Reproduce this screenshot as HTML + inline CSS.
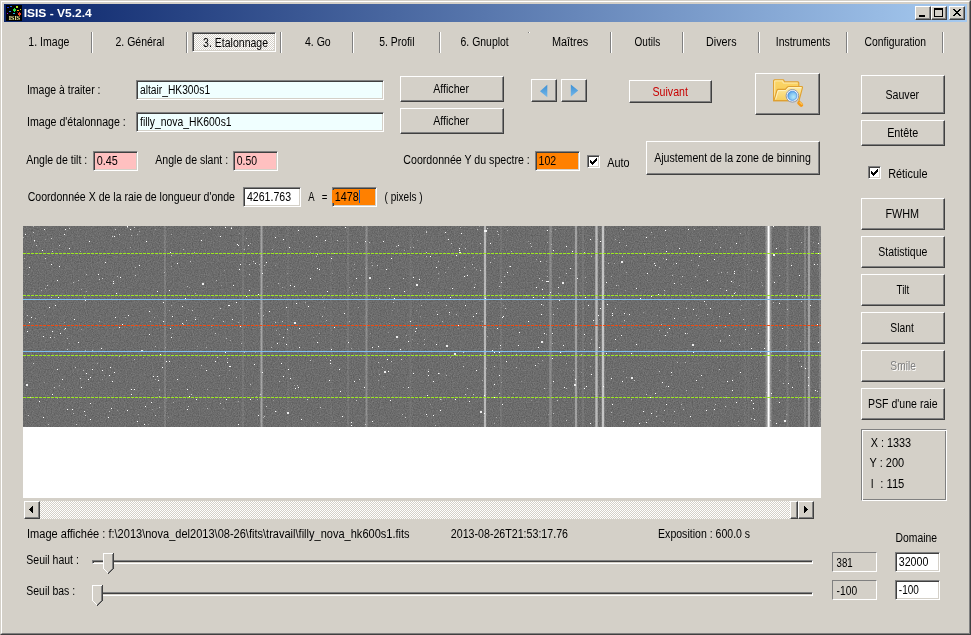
<!DOCTYPE html><html lang="fr"><head><meta charset="utf-8"><title>ISIS - V5.2.4</title><style>
html,body{margin:0;padding:0;background:#D4D0C8;overflow:hidden}
#w{will-change:transform;position:relative;width:971px;height:635px;background:#D4D0C8;overflow:hidden;font-family:"Liberation Sans",sans-serif}
#w *{box-sizing:border-box}
.abs{position:absolute}
.t{position:absolute;white-space:nowrap;font-size:12.5px;line-height:15px;height:15px;color:#000;transform-origin:0 0;display:block}
.btn{position:absolute;background:#D4D0C8;border:1px solid;border-color:#fff #404040 #404040 #fff;box-shadow:inset -1px -1px 0 #808080}
.edit{position:absolute;border:1px solid;border-color:#808080 #fff #fff #808080;box-shadow:inset 1px 1px 0 #404040, inset -1px -1px 0 #D4D0C8}
.sunk1{position:absolute;border:1px solid;border-color:#808080 #fff #fff #808080}
.sep{position:absolute;top:32px;width:2px;height:21px;border-left:1px solid #808080;border-right:1px solid #fff}
.spec{position:absolute;display:block}
.chk{position:absolute;width:13px;height:13px;background:#fff;border:1px solid;border-color:#808080 #fff #fff #808080;box-shadow:inset 1px 1px 0 #404040, inset -1px -1px 0 #D4D0C8}
.dither{background-image:conic-gradient(#fff 25%,#D4D0C8 0 50%,#fff 0 75%,#D4D0C8 0);background-size:2px 2px}
</style></head><body><div id="w">
<div class="abs" style="left:0;top:0;width:971px;height:635px;border:1px solid;border-color:#D4D0C8 #404040 #404040 #D4D0C8"></div>
<div class="abs" style="left:1px;top:1px;width:969px;height:633px;border:1px solid;border-color:#fff #808080 #808080 #fff"></div>
<div class="abs" style="left:4px;top:4px;width:963px;height:18px;background:linear-gradient(90deg,#0A246A,#A6CAF0)"></div>
<svg class="abs" style="left:6px;top:5px" width="16" height="16" viewBox="0 0 16 16" shape-rendering="crispEdges">
<rect width="16" height="16" fill="#000"/>
<rect x="1" y="2" width="2" height="1" fill="#1030e0"/><rect x="4" y="1" width="2" height="1" fill="#2070e0"/>
<rect x="10" y="1" width="2" height="2" fill="#b0e020"/><rect x="14" y="4" width="1" height="1" fill="#e0e020"/>
<rect x="7" y="4" width="3" height="2" fill="#20e040"/><rect x="8" y="3" width="1" height="4" fill="#20e040"/>
<rect x="11" y="5" width="2" height="1" fill="#f0a020"/><rect x="3" y="6" width="2" height="1" fill="#2080f0"/>
<rect x="1" y="8" width="1" height="1" fill="#a010e0"/><rect x="7" y="8" width="2" height="1" fill="#10b0e0"/>
<rect x="12" y="8" width="3" height="2" fill="#f04020"/><rect x="13" y="7" width="1" height="4" fill="#f04020"/><rect x="11" y="7" width="1" height="1" fill="#801008"/>
<text x="8.4" y="15" font-family="Liberation Serif,serif" font-weight="bold" font-size="6.5" text-anchor="middle" fill="#ffffa0" textLength="11.4" lengthAdjust="spacingAndGlyphs" shape-rendering="auto">ISIS</text>
</svg>
<div class="btn" style="left:915px;top:6px;width:16px;height:14px;"></div>
<div class="btn" style="left:931px;top:6px;width:16px;height:14px;"></div>
<div class="btn" style="left:949px;top:6px;width:16px;height:14px;"></div>
<div class="abs" style="left:919px;top:15px;width:6px;height:2px;background:#000"></div>
<div class="abs" style="left:934px;top:8px;width:9px;height:9px;border:1px solid #000;border-top-width:2px"></div>
<svg class="abs" style="left:953px;top:9px" width="8" height="7" viewBox="0 0 8 7" shape-rendering="crispEdges"><path d="M0 0h2v1h1v1h2v-1h1v-1h2v1h-1v1h-1v1h-1v1h1v1h1v1h1v1h-2v-1h-1v-1h-2v1h-1v1h-2v-1h1v-1h1v-1h1v-1h-1v-1h-1v-1h-1z" fill="#000"/></svg>
<div class="sep" style="left:91px"></div>
<div class="sep" style="left:186px"></div>
<div class="sep" style="left:280px"></div>
<div class="sep" style="left:352px"></div>
<div class="sep" style="left:439px"></div>
<div class="sep" style="left:610px"></div>
<div class="sep" style="left:682px"></div>
<div class="sep" style="left:758px"></div>
<div class="sep" style="left:846px"></div>
<div class="sep" style="left:942px"></div>
<div class="abs" style="left:528px;top:32px;width:1px;height:1px;background:#808080"></div><div class="abs" style="left:529px;top:32px;width:1px;height:1px;background:#fff"></div>
<div class="abs dither" style="left:192px;top:32px;width:84px;height:20px;border:1px solid;border-color:#808080 #fff #fff #808080;box-shadow:inset 1px 1px 0 #404040, inset -1px -1px 0 #D4D0C8"></div>
<div class="edit" style="left:136px;top:80px;width:248px;height:20px;background:#F0FFFF;"></div>
<div class="edit" style="left:136px;top:112px;width:248px;height:20px;background:#F0FFFF;"></div>
<div class="btn" style="left:400px;top:76px;width:104px;height:26px;"></div>
<div class="btn" style="left:400px;top:108px;width:104px;height:26px;"></div>
<div class="btn" style="left:531px;top:79px;width:26px;height:23px;"></div>
<div class="btn" style="left:561px;top:79px;width:26px;height:23px;"></div>
<svg class="abs" style="left:531px;top:79px" width="56" height="23" viewBox="0 0 56 23">
<defs><linearGradient id="ga" x1="0" y1="0" x2="0" y2="1"><stop offset="0" stop-color="#3c8fd4"/><stop offset="1" stop-color="#74b8ea"/></linearGradient></defs>
<path d="M9 12.2 L16.3 5.8 L16.3 18.3 Z" fill="url(#ga)"/>
<path d="M39.8 5.6 L47.2 11.6 L39.8 17.8 Z" fill="url(#ga)"/></svg>
<div class="btn" style="left:629px;top:80px;width:83px;height:23px;"></div>
<div class="btn" style="left:755px;top:73px;width:65px;height:42px;"></div>
<svg class="abs" style="left:768px;top:76px" width="40" height="34" viewBox="0 0 40 34">
<defs>
<linearGradient id="fb" x1="0" y1="0" x2="0" y2="1"><stop offset="0" stop-color="#fbd668"/><stop offset="1" stop-color="#f7c750"/></linearGradient>
<linearGradient id="ff" x1="0" y1="0" x2="0" y2="1"><stop offset="0" stop-color="#fdeaa4"/><stop offset="1" stop-color="#f8cf5c"/></linearGradient>
<radialGradient id="gl" cx="0.62" cy="0.62" r="0.75"><stop offset="0" stop-color="#b4e8fa"/><stop offset="0.55" stop-color="#84c4f0"/><stop offset="1" stop-color="#3c8ee4"/></radialGradient>
</defs>
<path d="M5.6 4.7 Q5.6 3.7 6.6 3.7 L15 3.7 Q15.8 3.7 16 4.6 L16.2 5.9 L29.8 5.9 Q30.8 5.9 30.8 6.9 L30.8 24.6 L5.6 24.6 Z" fill="url(#fb)" stroke="#dfa030" stroke-width="1.1"/>
<path d="M6.7 23.6 L6.7 4.9 L14.9 4.9 L15.2 7 L29.7 7" fill="none" stroke="#fff3c4" stroke-width="0.9" opacity="0.9"/>
<path d="M5.9 24.6 L9 14.2 Q9.3 13.4 10.2 13.4 L17.2 13.4 L19.6 10.9 Q20 10.5 20.8 10.5 L33.6 10.5 Q34.8 10.5 34.5 11.7 L31 24.6 Z" fill="url(#ff)" stroke="#dfa030" stroke-width="1.1"/>
<path d="M7.6 23.4 L10.2 14.6 L17.7 14.6 L20.6 11.7 L33 11.7" fill="none" stroke="#fff8d8" stroke-width="0.8" opacity="0.9"/>
<path d="M29 24.6 L30.6 26.2" stroke="#c8ccd4" stroke-width="2.2" stroke-linecap="butt"/>
<path d="M31.2 26.9 L33.2 28.9" stroke="#f49a18" stroke-width="4" stroke-linecap="round"/>
<path d="M31.9 26.3 L34 28.3" stroke="#fdc860" stroke-width="1.1" stroke-linecap="round"/>
<circle cx="24.4" cy="19.8" r="6.3" fill="#f4f7fa" stroke="#8890a4" stroke-width="0.9"/>
<circle cx="24.4" cy="19.8" r="4.6" fill="url(#gl)" stroke="#4088dc" stroke-width="0.7"/>
</svg>
<div class="edit" style="left:93px;top:151px;width:45px;height:20px;background:#FFC0C0;"></div>
<div class="edit" style="left:233px;top:151px;width:45px;height:20px;background:#FFC0C0;"></div>
<div class="edit" style="left:535px;top:151px;width:45px;height:20px;background:#FF8000;"></div>
<div class="chk" style="left:587px;top:155px"></div>
<svg class="abs" style="left:590px;top:158px" width="7" height="7" viewBox="0 0 7 7" shape-rendering="crispEdges"><path d="M0 2h1v1h1v1h1v-1h1v-1h1v-1h1v-1h1v3h-1v1h-1v1h-1v1h-1v1h-1v-1h-1v-1h-1z" fill="#000"/></svg>
<div class="btn" style="left:646px;top:141px;width:174px;height:34px;"></div>
<div class="edit" style="left:243px;top:187px;width:58px;height:20px;background:#fff;"></div>
<div class="edit" style="left:332px;top:187px;width:45px;height:20px;background:#FF8000;"></div>
<div class="abs" style="left:332px;top:190px;width:2px;height:13px;background:#FF8000"></div>
<div class="abs" style="left:359px;top:190px;width:1px;height:13px;background:#1060d0"></div>
<div class="btn" style="left:861px;top:75px;width:84px;height:39px;"></div>
<div class="btn" style="left:861px;top:120px;width:84px;height:26px;"></div>
<div class="chk" style="left:868px;top:166px"></div>
<svg class="abs" style="left:871px;top:169px" width="7" height="7" viewBox="0 0 7 7" shape-rendering="crispEdges"><path d="M0 2h1v1h1v1h1v-1h1v-1h1v-1h1v-1h1v3h-1v1h-1v1h-1v1h-1v1h-1v-1h-1v-1h-1z" fill="#000"/></svg>
<div class="btn" style="left:861px;top:198px;width:84px;height:32px;"></div>
<div class="btn" style="left:861px;top:236px;width:84px;height:32px;"></div>
<div class="btn" style="left:861px;top:274px;width:84px;height:32px;"></div>
<div class="btn" style="left:861px;top:312px;width:84px;height:32px;"></div>
<div class="btn" style="left:861px;top:350px;width:84px;height:32px;"></div>
<div class="btn" style="left:861px;top:388px;width:84px;height:32px;"></div>
<div class="abs" style="left:861px;top:429px;width:86px;height:72px;border:1px solid;border-color:#808080 #fff #fff #808080;box-shadow:inset 1px 1px 0 #fff, inset -1px -1px 0 #808080"></div>
<div class="abs" style="left:23px;top:226px;width:798px;height:272px;background:#fff"></div>
<svg class="spec" width="798" height="201" viewBox="0 0 798 201" style="left:23px;top:226px">
<defs><filter id="nz" x="0" y="0" width="100%" height="100%" color-interpolation-filters="sRGB"><feTurbulence type="fractalNoise" baseFrequency="0.85" numOctaves="2" seed="3" result="n"/><feColorMatrix in="n" type="matrix" values="0.2 0 0 0 0.323  0.2 0 0 0 0.323  0.2 0 0 0 0.323  0 0 0 0 1"/></filter><filter id="bl" x="-1%" y="0" width="102%" height="100%"><feGaussianBlur stdDeviation="0.55 0"/></filter></defs>
<rect width="798" height="201" fill="#6e6e6e"/>
<rect width="798" height="201" filter="url(#nz)"/>
<g filter="url(#bl)">
<rect x="141.00" y="0" width="2" height="201" fill="#fff" fill-opacity="0.121"/>
<rect x="219.00" y="0" width="2" height="201" fill="#fff" fill-opacity="0.069"/>
<rect x="237.50" y="0" width="2" height="201" fill="#fff" fill-opacity="0.379"/>
<rect x="264.00" y="0" width="2" height="201" fill="#fff" fill-opacity="0.034"/>
<rect x="307.00" y="0" width="2" height="201" fill="#fff" fill-opacity="0.026"/>
<rect x="324.00" y="0" width="2" height="201" fill="#fff" fill-opacity="0.069"/>
<rect x="342.50" y="0" width="2" height="201" fill="#fff" fill-opacity="0.224"/>
<rect x="386.50" y="0" width="2" height="201" fill="#fff" fill-opacity="0.052"/>
<rect x="460.90" y="0" width="2.2" height="201" fill="#fff" fill-opacity="0.517"/>
<rect x="477.00" y="0" width="2" height="201" fill="#fff" fill-opacity="0.060"/>
<rect x="526.25" y="0" width="2.5" height="201" fill="#fff" fill-opacity="0.207"/>
<rect x="551.90" y="0" width="2.2" height="201" fill="#fff" fill-opacity="0.362"/>
<rect x="559.00" y="0" width="2" height="201" fill="#fff" fill-opacity="0.069"/>
<rect x="572.30" y="0" width="2.4" height="201" fill="#fff" fill-opacity="0.534"/>
<rect x="578.80" y="0" width="2.4" height="201" fill="#fff" fill-opacity="0.603"/>
<rect x="721.25" y="0" width="1.5" height="201" fill="#fff" fill-opacity="0.043"/>
<rect x="724.95" y="0" width="1.5" height="201" fill="#fff" fill-opacity="0.043"/>
<rect x="763.50" y="0" width="2" height="201" fill="#fff" fill-opacity="0.095"/>
<rect x="781.00" y="0" width="2" height="201" fill="#fff" fill-opacity="0.155"/>
<rect x="784.90" y="0" width="2.2" height="201" fill="#fff" fill-opacity="0.362"/>
<rect x="796.00" y="0" width="2" height="201" fill="#fff" fill-opacity="0.121"/>
<rect x="742.5" y="0" width="6" height="201" fill="#fff" fill-opacity="0.25"/>
<rect x="744.6" y="0" width="2.0" height="201" fill="#ffffff"/>
</g>
<g shape-rendering="crispEdges">
<rect x="331" y="38" width="1" height="1" fill="#aaa"/>
<rect x="74" y="137" width="1" height="1" fill="#aaa"/>
<rect x="519" y="54" width="1" height="1" fill="#ccc"/>
<rect x="428" y="17" width="1" height="1" fill="#ccc"/>
<rect x="60" y="144" width="1" height="1" fill="#bbb"/>
<rect x="645" y="160" width="1" height="1" fill="#fff"/>
<rect x="63" y="147" width="1" height="1" fill="#fff"/>
<rect x="50" y="56" width="1" height="1" fill="#bbb"/>
<rect x="296" y="107" width="1" height="1" fill="#aaa"/>
<rect x="584" y="78" width="1" height="1" fill="#fff"/>
<rect x="698" y="46" width="1" height="1" fill="#bbb"/>
<rect x="381" y="24" width="1" height="1" fill="#aaa"/>
<rect x="577" y="15" width="1" height="1" fill="#fff"/>
<rect x="508" y="174" width="1" height="1" fill="#999"/>
<rect x="476" y="149" width="1" height="1" fill="#fff"/>
<rect x="370" y="76" width="1" height="1" fill="#bbb"/>
<rect x="715" y="199" width="1" height="1" fill="#999"/>
<rect x="537" y="126" width="1" height="1" fill="#fff"/>
<rect x="746" y="114" width="1" height="1" fill="#aaa"/>
<rect x="120" y="131" width="1" height="1" fill="#999"/>
<rect x="155" y="125" width="1" height="1" fill="#aaa"/>
<rect x="782" y="142" width="1" height="1" fill="#fff"/>
<rect x="321" y="87" width="1" height="1" fill="#fff"/>
<rect x="608" y="127" width="1" height="1" fill="#fff"/>
<rect x="467" y="17" width="1" height="1" fill="#fff"/>
<rect x="276" y="121" width="1" height="1" fill="#fff"/>
<rect x="66" y="15" width="1" height="1" fill="#fff"/>
<rect x="317" y="165" width="1" height="1" fill="#fff"/>
<rect x="697" y="114" width="1" height="1" fill="#ccc"/>
<rect x="684" y="88" width="1" height="1" fill="#ccc"/>
<rect x="363" y="43" width="1" height="1" fill="#fff"/>
<rect x="505" y="15" width="1" height="1" fill="#999"/>
<rect x="132" y="189" width="1" height="1" fill="#ccc"/>
<rect x="508" y="20" width="1" height="1" fill="#ccc"/>
<rect x="562" y="71" width="1" height="1" fill="#fff"/>
<rect x="440" y="140" width="1" height="1" fill="#ccc"/>
<rect x="367" y="174" width="1" height="1" fill="#fff"/>
<rect x="236" y="38" width="1" height="1" fill="#bbb"/>
<rect x="237" y="168" width="1" height="1" fill="#ccc"/>
<rect x="603" y="46" width="1" height="1" fill="#aaa"/>
<rect x="149" y="107" width="1" height="1" fill="#999"/>
<rect x="128" y="176" width="1" height="1" fill="#fff"/>
<rect x="632" y="167" width="1" height="1" fill="#fff"/>
<rect x="55" y="116" width="1" height="1" fill="#fff"/>
<rect x="696" y="143" width="1" height="1" fill="#ccc"/>
<rect x="403" y="26" width="1" height="1" fill="#ccc"/>
<rect x="63" y="48" width="1" height="1" fill="#bbb"/>
<rect x="451" y="41" width="1" height="1" fill="#aaa"/>
<rect x="104" y="0" width="1" height="1" fill="#fff"/>
<rect x="549" y="25" width="1" height="1" fill="#fff"/>
<rect x="628" y="6" width="1" height="1" fill="#bbb"/>
<rect x="628" y="96" width="1" height="1" fill="#999"/>
<rect x="355" y="154" width="1" height="1" fill="#aaa"/>
<rect x="118" y="124" width="2" height="2" fill="#eee"/>
<rect x="477" y="122" width="1" height="1" fill="#aaa"/>
<rect x="147" y="26" width="1" height="1" fill="#fff"/>
<rect x="758" y="67" width="1" height="1" fill="#bbb"/>
<rect x="528" y="5" width="1" height="1" fill="#999"/>
<rect x="150" y="176" width="1" height="1" fill="#aaa"/>
<rect x="776" y="135" width="1" height="1" fill="#aaa"/>
<rect x="712" y="66" width="1" height="1" fill="#bbb"/>
<rect x="364" y="197" width="1" height="1" fill="#999"/>
<rect x="651" y="57" width="1" height="1" fill="#fff"/>
<rect x="776" y="49" width="1" height="1" fill="#fff"/>
<rect x="410" y="189" width="1" height="1" fill="#fff"/>
<rect x="204" y="132" width="1" height="1" fill="#aaa"/>
<rect x="28" y="71" width="1" height="1" fill="#bbb"/>
<rect x="709" y="154" width="1" height="1" fill="#fff"/>
<rect x="457" y="185" width="2" height="2" fill="#eee"/>
<rect x="373" y="20" width="1" height="1" fill="#bbb"/>
<rect x="481" y="50" width="1" height="1" fill="#ccc"/>
<rect x="639" y="156" width="1" height="1" fill="#fff"/>
<rect x="490" y="167" width="1" height="1" fill="#aaa"/>
<rect x="676" y="30" width="1" height="1" fill="#fff"/>
<rect x="728" y="192" width="1" height="1" fill="#bbb"/>
<rect x="444" y="162" width="1" height="1" fill="#ccc"/>
<rect x="474" y="102" width="1" height="1" fill="#fff"/>
<rect x="86" y="185" width="1" height="1" fill="#bbb"/>
<rect x="28" y="38" width="1" height="1" fill="#fff"/>
<rect x="476" y="167" width="1" height="1" fill="#ccc"/>
<rect x="673" y="89" width="1" height="1" fill="#bbb"/>
<rect x="21" y="3" width="1" height="1" fill="#fff"/>
<rect x="743" y="166" width="1" height="1" fill="#bbb"/>
<rect x="444" y="49" width="1" height="1" fill="#fff"/>
<rect x="216" y="7" width="1" height="1" fill="#999"/>
<rect x="513" y="61" width="1" height="1" fill="#fff"/>
<rect x="333" y="66" width="1" height="1" fill="#bbb"/>
<rect x="62" y="189" width="1" height="1" fill="#ccc"/>
<rect x="678" y="149" width="1" height="1" fill="#fff"/>
<rect x="529" y="107" width="1" height="1" fill="#fff"/>
<rect x="513" y="33" width="1" height="1" fill="#aaa"/>
<rect x="450" y="198" width="1" height="1" fill="#aaa"/>
<rect x="794" y="38" width="1" height="1" fill="#ccc"/>
<rect x="633" y="185" width="1" height="1" fill="#aaa"/>
<rect x="333" y="174" width="1" height="1" fill="#ccc"/>
<rect x="795" y="27" width="1" height="1" fill="#fff"/>
<rect x="58" y="63" width="1" height="1" fill="#aaa"/>
<rect x="790" y="25" width="1" height="1" fill="#aaa"/>
<rect x="778" y="16" width="1" height="1" fill="#bbb"/>
<rect x="709" y="70" width="1" height="1" fill="#ccc"/>
<rect x="519" y="63" width="1" height="1" fill="#fff"/>
<rect x="265" y="143" width="1" height="1" fill="#fff"/>
<rect x="207" y="114" width="1" height="1" fill="#aaa"/>
<rect x="401" y="113" width="1" height="1" fill="#bbb"/>
<rect x="438" y="18" width="1" height="1" fill="#999"/>
<rect x="125" y="198" width="1" height="1" fill="#999"/>
<rect x="146" y="64" width="1" height="1" fill="#fff"/>
<rect x="478" y="56" width="1" height="1" fill="#fff"/>
<rect x="96" y="101" width="1" height="1" fill="#fff"/>
<rect x="166" y="170" width="1" height="1" fill="#fff"/>
<rect x="165" y="180" width="1" height="1" fill="#ccc"/>
<rect x="347" y="107" width="1" height="1" fill="#999"/>
<rect x="94" y="184" width="1" height="1" fill="#999"/>
<rect x="567" y="117" width="1" height="1" fill="#aaa"/>
<rect x="393" y="84" width="1" height="1" fill="#999"/>
<rect x="524" y="16" width="1" height="1" fill="#bbb"/>
<rect x="107" y="21" width="1" height="1" fill="#aaa"/>
<rect x="185" y="69" width="1" height="1" fill="#fff"/>
<rect x="432" y="173" width="1" height="1" fill="#fff"/>
<rect x="264" y="103" width="1" height="1" fill="#ccc"/>
<rect x="717" y="83" width="1" height="1" fill="#aaa"/>
<rect x="704" y="46" width="1" height="1" fill="#aaa"/>
<rect x="275" y="4" width="1" height="1" fill="#fff"/>
<rect x="266" y="21" width="1" height="1" fill="#fff"/>
<rect x="227" y="17" width="1" height="1" fill="#aaa"/>
<rect x="464" y="2" width="1" height="1" fill="#ccc"/>
<rect x="274" y="159" width="1" height="1" fill="#bbb"/>
<rect x="112" y="41" width="1" height="1" fill="#bbb"/>
<rect x="206" y="79" width="1" height="1" fill="#fff"/>
<rect x="543" y="194" width="1" height="1" fill="#ccc"/>
<rect x="512" y="172" width="1" height="1" fill="#999"/>
<rect x="18" y="64" width="1" height="1" fill="#aaa"/>
<rect x="750" y="129" width="1" height="1" fill="#fff"/>
<rect x="194" y="131" width="1" height="1" fill="#ccc"/>
<rect x="108" y="168" width="1" height="1" fill="#fff"/>
<rect x="442" y="168" width="1" height="1" fill="#ccc"/>
<rect x="518" y="78" width="1" height="1" fill="#fff"/>
<rect x="235" y="87" width="1" height="1" fill="#bbb"/>
<rect x="414" y="88" width="1" height="1" fill="#fff"/>
<rect x="132" y="3" width="1" height="1" fill="#999"/>
<rect x="441" y="41" width="1" height="1" fill="#ccc"/>
<rect x="518" y="171" width="1" height="1" fill="#fff"/>
<rect x="613" y="62" width="1" height="1" fill="#fff"/>
<rect x="46" y="117" width="1" height="1" fill="#999"/>
<rect x="456" y="0" width="1" height="1" fill="#999"/>
<rect x="560" y="82" width="1" height="1" fill="#999"/>
<rect x="223" y="91" width="1" height="1" fill="#999"/>
<rect x="390" y="21" width="1" height="1" fill="#bbb"/>
<rect x="254" y="129" width="1" height="1" fill="#fff"/>
<rect x="93" y="67" width="1" height="1" fill="#fff"/>
<rect x="147" y="102" width="1" height="1" fill="#fff"/>
<rect x="403" y="5" width="1" height="1" fill="#bbb"/>
<rect x="86" y="149" width="1" height="1" fill="#fff"/>
<rect x="768" y="39" width="1" height="1" fill="#fff"/>
<rect x="733" y="152" width="1" height="1" fill="#999"/>
<rect x="737" y="126" width="1" height="1" fill="#bbb"/>
<rect x="44" y="183" width="1" height="1" fill="#fff"/>
<rect x="642" y="109" width="1" height="1" fill="#fff"/>
<rect x="517" y="35" width="1" height="1" fill="#fff"/>
<rect x="770" y="129" width="1" height="1" fill="#fff"/>
<rect x="16" y="175" width="1" height="1" fill="#fff"/>
<rect x="728" y="174" width="1" height="1" fill="#fff"/>
<rect x="658" y="58" width="1" height="1" fill="#aaa"/>
<rect x="136" y="163" width="1" height="1" fill="#aaa"/>
<rect x="385" y="115" width="1" height="1" fill="#fff"/>
<rect x="642" y="4" width="1" height="1" fill="#fff"/>
<rect x="697" y="62" width="1" height="1" fill="#aaa"/>
<rect x="467" y="17" width="1" height="1" fill="#fff"/>
<rect x="515" y="137" width="1" height="1" fill="#aaa"/>
<rect x="763" y="188" width="1" height="1" fill="#aaa"/>
<rect x="271" y="60" width="1" height="1" fill="#fff"/>
<rect x="210" y="59" width="1" height="1" fill="#fff"/>
<rect x="471" y="126" width="1" height="1" fill="#fff"/>
<rect x="78" y="122" width="1" height="1" fill="#fff"/>
<rect x="294" y="196" width="1" height="1" fill="#bbb"/>
<rect x="79" y="153" width="1" height="1" fill="#999"/>
<rect x="667" y="190" width="1" height="1" fill="#fff"/>
<rect x="636" y="145" width="1" height="1" fill="#ccc"/>
<rect x="62" y="124" width="1" height="1" fill="#aaa"/>
<rect x="708" y="55" width="1" height="1" fill="#fff"/>
<rect x="297" y="181" width="1" height="1" fill="#ccc"/>
<rect x="477" y="119" width="1" height="1" fill="#fff"/>
<rect x="562" y="51" width="1" height="1" fill="#aaa"/>
<rect x="484" y="4" width="1" height="1" fill="#aaa"/>
<rect x="518" y="115" width="2" height="2" fill="#eee"/>
<rect x="396" y="53" width="1" height="1" fill="#fff"/>
<rect x="215" y="19" width="1" height="1" fill="#fff"/>
<rect x="145" y="191" width="1" height="1" fill="#999"/>
<rect x="135" y="154" width="1" height="1" fill="#fff"/>
<rect x="520" y="71" width="1" height="1" fill="#fff"/>
<rect x="720" y="93" width="1" height="1" fill="#ccc"/>
<rect x="403" y="6" width="1" height="1" fill="#ccc"/>
<rect x="697" y="115" width="1" height="1" fill="#bbb"/>
<rect x="426" y="88" width="1" height="1" fill="#aaa"/>
<rect x="339" y="0" width="1" height="1" fill="#999"/>
<rect x="407" y="30" width="1" height="1" fill="#fff"/>
<rect x="200" y="182" width="1" height="1" fill="#999"/>
<rect x="259" y="95" width="1" height="1" fill="#ccc"/>
<rect x="603" y="19" width="1" height="1" fill="#ccc"/>
<rect x="773" y="70" width="1" height="1" fill="#fff"/>
<rect x="287" y="26" width="1" height="1" fill="#999"/>
<rect x="650" y="38" width="1" height="1" fill="#999"/>
<rect x="446" y="130" width="1" height="1" fill="#999"/>
<rect x="438" y="7" width="1" height="1" fill="#fff"/>
<rect x="646" y="102" width="1" height="1" fill="#fff"/>
<rect x="567" y="140" width="1" height="1" fill="#aaa"/>
<rect x="50" y="187" width="1" height="1" fill="#bbb"/>
<rect x="659" y="73" width="1" height="1" fill="#bbb"/>
<rect x="174" y="120" width="1" height="1" fill="#999"/>
<rect x="304" y="65" width="1" height="1" fill="#fff"/>
<rect x="668" y="66" width="1" height="1" fill="#bbb"/>
<rect x="308" y="123" width="1" height="1" fill="#fff"/>
<rect x="403" y="30" width="1" height="1" fill="#bbb"/>
<rect x="76" y="53" width="1" height="1" fill="#ccc"/>
<rect x="563" y="56" width="1" height="1" fill="#999"/>
<rect x="777" y="115" width="1" height="1" fill="#bbb"/>
<rect x="249" y="23" width="1" height="1" fill="#aaa"/>
<rect x="326" y="61" width="1" height="1" fill="#bbb"/>
<rect x="20" y="191" width="1" height="1" fill="#fff"/>
<rect x="392" y="105" width="1" height="1" fill="#fff"/>
<rect x="215" y="96" width="1" height="1" fill="#aaa"/>
<rect x="510" y="71" width="1" height="1" fill="#fff"/>
<rect x="368" y="32" width="1" height="1" fill="#fff"/>
<rect x="541" y="161" width="1" height="1" fill="#fff"/>
<rect x="221" y="23" width="1" height="1" fill="#bbb"/>
<rect x="393" y="102" width="1" height="1" fill="#fff"/>
<rect x="442" y="79" width="1" height="1" fill="#fff"/>
<rect x="22" y="32" width="1" height="1" fill="#ccc"/>
<rect x="601" y="125" width="1" height="1" fill="#ccc"/>
<rect x="540" y="119" width="1" height="1" fill="#fff"/>
<rect x="254" y="27" width="1" height="1" fill="#bbb"/>
<rect x="534" y="174" width="1" height="1" fill="#ccc"/>
<rect x="87" y="141" width="1" height="1" fill="#fff"/>
<rect x="1" y="32" width="1" height="1" fill="#aaa"/>
<rect x="660" y="183" width="1" height="1" fill="#bbb"/>
<rect x="641" y="64" width="1" height="1" fill="#ccc"/>
<rect x="715" y="195" width="1" height="1" fill="#aaa"/>
<rect x="307" y="134" width="1" height="1" fill="#fff"/>
<rect x="196" y="99" width="1" height="1" fill="#aaa"/>
<rect x="10" y="137" width="1" height="1" fill="#ccc"/>
<rect x="285" y="80" width="1" height="1" fill="#fff"/>
<rect x="248" y="121" width="1" height="1" fill="#bbb"/>
<rect x="29" y="105" width="1" height="1" fill="#fff"/>
<rect x="314" y="14" width="1" height="1" fill="#ccc"/>
<rect x="690" y="165" width="1" height="1" fill="#999"/>
<rect x="233" y="170" width="1" height="1" fill="#999"/>
<rect x="232" y="126" width="1" height="1" fill="#999"/>
<rect x="735" y="107" width="1" height="1" fill="#ccc"/>
<rect x="202" y="1" width="1" height="1" fill="#fff"/>
<rect x="756" y="129" width="1" height="1" fill="#ccc"/>
<rect x="205" y="79" width="1" height="1" fill="#fff"/>
<rect x="198" y="59" width="1" height="1" fill="#999"/>
<rect x="778" y="75" width="1" height="1" fill="#ccc"/>
<rect x="624" y="47" width="1" height="1" fill="#fff"/>
<rect x="496" y="106" width="1" height="1" fill="#fff"/>
<rect x="57" y="152" width="1" height="1" fill="#ccc"/>
<rect x="55" y="54" width="1" height="1" fill="#bbb"/>
<rect x="425" y="13" width="1" height="1" fill="#fff"/>
<rect x="188" y="100" width="1" height="1" fill="#999"/>
<rect x="750" y="28" width="2" height="2" fill="#eee"/>
<rect x="169" y="84" width="1" height="1" fill="#ccc"/>
<rect x="32" y="79" width="1" height="1" fill="#fff"/>
<rect x="387" y="95" width="1" height="1" fill="#fff"/>
<rect x="453" y="43" width="1" height="1" fill="#aaa"/>
<rect x="286" y="20" width="1" height="1" fill="#aaa"/>
<rect x="574" y="194" width="1" height="1" fill="#999"/>
<rect x="787" y="79" width="1" height="1" fill="#fff"/>
<rect x="442" y="22" width="1" height="1" fill="#ccc"/>
<rect x="200" y="95" width="1" height="1" fill="#ccc"/>
<rect x="197" y="82" width="1" height="1" fill="#ccc"/>
<rect x="31" y="161" width="1" height="1" fill="#ccc"/>
<rect x="41" y="96" width="1" height="1" fill="#aaa"/>
<rect x="63" y="65" width="1" height="1" fill="#aaa"/>
<rect x="620" y="86" width="1" height="1" fill="#999"/>
<rect x="631" y="11" width="1" height="1" fill="#999"/>
<rect x="282" y="76" width="1" height="1" fill="#aaa"/>
<rect x="24" y="59" width="1" height="1" fill="#ccc"/>
<rect x="794" y="98" width="1" height="1" fill="#fff"/>
<rect x="440" y="126" width="1" height="1" fill="#ccc"/>
<rect x="187" y="2" width="1" height="1" fill="#fff"/>
<rect x="756" y="77" width="1" height="1" fill="#fff"/>
<rect x="791" y="38" width="1" height="1" fill="#fff"/>
<rect x="335" y="81" width="1" height="1" fill="#aaa"/>
<rect x="524" y="50" width="1" height="1" fill="#bbb"/>
<rect x="253" y="104" width="1" height="1" fill="#aaa"/>
<rect x="493" y="141" width="1" height="1" fill="#bbb"/>
<rect x="436" y="26" width="2" height="2" fill="#eee"/>
<rect x="271" y="159" width="1" height="1" fill="#aaa"/>
<rect x="431" y="127" width="2" height="2" fill="#eee"/>
<rect x="457" y="44" width="1" height="1" fill="#ccc"/>
<rect x="471" y="158" width="1" height="1" fill="#fff"/>
<rect x="240" y="191" width="1" height="1" fill="#aaa"/>
<rect x="300" y="75" width="1" height="1" fill="#999"/>
<rect x="381" y="65" width="1" height="1" fill="#fff"/>
<rect x="203" y="112" width="1" height="1" fill="#bbb"/>
<rect x="241" y="39" width="1" height="1" fill="#bbb"/>
<rect x="334" y="16" width="1" height="1" fill="#bbb"/>
<rect x="519" y="134" width="1" height="1" fill="#aaa"/>
<rect x="669" y="118" width="2" height="2" fill="#eee"/>
<rect x="104" y="1" width="1" height="1" fill="#bbb"/>
<rect x="459" y="95" width="1" height="1" fill="#999"/>
<rect x="238" y="30" width="1" height="1" fill="#bbb"/>
<rect x="76" y="95" width="1" height="1" fill="#bbb"/>
<rect x="459" y="154" width="1" height="1" fill="#aaa"/>
<rect x="108" y="163" width="1" height="1" fill="#fff"/>
<rect x="634" y="89" width="1" height="1" fill="#999"/>
<rect x="348" y="36" width="1" height="1" fill="#999"/>
<rect x="39" y="153" width="1" height="1" fill="#fff"/>
<rect x="208" y="2" width="1" height="1" fill="#fff"/>
<rect x="418" y="173" width="1" height="1" fill="#999"/>
<rect x="79" y="52" width="1" height="1" fill="#ccc"/>
<rect x="561" y="123" width="1" height="1" fill="#aaa"/>
<rect x="404" y="169" width="1" height="1" fill="#fff"/>
<rect x="654" y="136" width="1" height="1" fill="#bbb"/>
<rect x="407" y="178" width="1" height="1" fill="#999"/>
<rect x="683" y="78" width="1" height="1" fill="#aaa"/>
<rect x="319" y="190" width="1" height="1" fill="#fff"/>
<rect x="365" y="106" width="1" height="1" fill="#999"/>
<rect x="659" y="50" width="1" height="1" fill="#ccc"/>
<rect x="208" y="1" width="1" height="1" fill="#bbb"/>
<rect x="433" y="29" width="1" height="1" fill="#fff"/>
<rect x="415" y="147" width="1" height="1" fill="#fff"/>
<rect x="471" y="197" width="1" height="1" fill="#aaa"/>
<rect x="52" y="141" width="1" height="1" fill="#ccc"/>
<rect x="91" y="146" width="1" height="1" fill="#fff"/>
<rect x="379" y="188" width="1" height="1" fill="#bbb"/>
<rect x="356" y="72" width="1" height="1" fill="#bbb"/>
<rect x="68" y="27" width="1" height="1" fill="#bbb"/>
<rect x="308" y="32" width="1" height="1" fill="#fff"/>
<rect x="44" y="123" width="1" height="1" fill="#ccc"/>
<rect x="88" y="182" width="1" height="1" fill="#fff"/>
<rect x="164" y="163" width="1" height="1" fill="#fff"/>
<rect x="227" y="158" width="1" height="1" fill="#bbb"/>
<rect x="484" y="46" width="1" height="1" fill="#fff"/>
<rect x="42" y="102" width="1" height="1" fill="#fff"/>
<rect x="160" y="98" width="1" height="1" fill="#bbb"/>
<rect x="252" y="185" width="1" height="1" fill="#fff"/>
<rect x="197" y="10" width="1" height="1" fill="#fff"/>
<rect x="775" y="172" width="1" height="1" fill="#999"/>
<rect x="120" y="99" width="1" height="1" fill="#fff"/>
<rect x="563" y="160" width="1" height="1" fill="#fff"/>
<rect x="664" y="107" width="1" height="1" fill="#bbb"/>
<rect x="435" y="99" width="1" height="1" fill="#fff"/>
<rect x="457" y="128" width="1" height="1" fill="#aaa"/>
<rect x="3" y="158" width="2" height="2" fill="#eee"/>
<rect x="476" y="60" width="1" height="1" fill="#ccc"/>
<rect x="183" y="121" width="1" height="1" fill="#aaa"/>
<rect x="131" y="91" width="1" height="1" fill="#aaa"/>
<rect x="452" y="129" width="1" height="1" fill="#aaa"/>
<rect x="41" y="162" width="1" height="1" fill="#999"/>
<rect x="796" y="184" width="1" height="1" fill="#aaa"/>
<rect x="770" y="129" width="1" height="1" fill="#fff"/>
<rect x="668" y="34" width="1" height="1" fill="#aaa"/>
<rect x="628" y="187" width="1" height="1" fill="#fff"/>
<rect x="112" y="49" width="1" height="1" fill="#ccc"/>
<rect x="294" y="42" width="1" height="1" fill="#fff"/>
<rect x="738" y="56" width="1" height="1" fill="#999"/>
<rect x="625" y="193" width="1" height="1" fill="#999"/>
<rect x="628" y="70" width="1" height="1" fill="#fff"/>
<rect x="467" y="36" width="1" height="1" fill="#ccc"/>
<rect x="213" y="151" width="1" height="1" fill="#bbb"/>
<rect x="326" y="95" width="1" height="1" fill="#bbb"/>
<rect x="413" y="41" width="1" height="1" fill="#fff"/>
<rect x="284" y="173" width="1" height="1" fill="#ccc"/>
<rect x="172" y="67" width="1" height="1" fill="#aaa"/>
<rect x="651" y="92" width="1" height="1" fill="#fff"/>
<rect x="463" y="142" width="1" height="1" fill="#aaa"/>
<rect x="258" y="137" width="1" height="1" fill="#fff"/>
<rect x="403" y="188" width="1" height="1" fill="#fff"/>
<rect x="271" y="96" width="2" height="2" fill="#eee"/>
<rect x="591" y="37" width="1" height="1" fill="#aaa"/>
<rect x="452" y="58" width="1" height="1" fill="#aaa"/>
<rect x="303" y="132" width="1" height="1" fill="#999"/>
<rect x="750" y="0" width="1" height="1" fill="#fff"/>
<rect x="226" y="38" width="1" height="1" fill="#ccc"/>
<rect x="427" y="131" width="1" height="1" fill="#aaa"/>
<rect x="135" y="125" width="1" height="1" fill="#aaa"/>
<rect x="22" y="13" width="1" height="1" fill="#999"/>
<rect x="311" y="27" width="1" height="1" fill="#bbb"/>
<rect x="423" y="149" width="1" height="1" fill="#bbb"/>
<rect x="209" y="93" width="1" height="1" fill="#fff"/>
<rect x="486" y="40" width="1" height="1" fill="#bbb"/>
<rect x="724" y="38" width="1" height="1" fill="#aaa"/>
<rect x="653" y="37" width="1" height="1" fill="#fff"/>
<rect x="276" y="102" width="1" height="1" fill="#fff"/>
<rect x="11" y="14" width="1" height="1" fill="#fff"/>
<rect x="575" y="89" width="1" height="1" fill="#fff"/>
<rect x="592" y="113" width="1" height="1" fill="#fff"/>
<rect x="530" y="187" width="1" height="1" fill="#bbb"/>
<rect x="0" y="11" width="1" height="1" fill="#aaa"/>
<rect x="415" y="47" width="1" height="1" fill="#aaa"/>
<rect x="107" y="3" width="1" height="1" fill="#fff"/>
<rect x="672" y="50" width="1" height="1" fill="#bbb"/>
<rect x="530" y="155" width="1" height="1" fill="#fff"/>
<rect x="663" y="164" width="1" height="1" fill="#bbb"/>
<rect x="520" y="79" width="1" height="1" fill="#aaa"/>
<rect x="741" y="122" width="1" height="1" fill="#fff"/>
<rect x="6" y="96" width="1" height="1" fill="#fff"/>
<rect x="763" y="119" width="1" height="1" fill="#ccc"/>
<rect x="179" y="57" width="2" height="2" fill="#eee"/>
<rect x="267" y="59" width="1" height="1" fill="#fff"/>
<rect x="126" y="85" width="1" height="1" fill="#fff"/>
<rect x="711" y="67" width="1" height="1" fill="#fff"/>
<rect x="272" y="162" width="1" height="1" fill="#fff"/>
<rect x="446" y="175" width="1" height="1" fill="#fff"/>
<rect x="535" y="67" width="1" height="1" fill="#bbb"/>
<rect x="87" y="129" width="1" height="1" fill="#999"/>
<rect x="241" y="190" width="1" height="1" fill="#bbb"/>
<rect x="764" y="83" width="1" height="1" fill="#ccc"/>
<rect x="336" y="153" width="1" height="1" fill="#ccc"/>
<rect x="483" y="135" width="1" height="1" fill="#fff"/>
<rect x="27" y="111" width="1" height="1" fill="#fff"/>
<rect x="239" y="146" width="1" height="1" fill="#fff"/>
<rect x="217" y="100" width="1" height="1" fill="#fff"/>
<rect x="79" y="144" width="1" height="1" fill="#fff"/>
<rect x="148" y="8" width="1" height="1" fill="#aaa"/>
<rect x="636" y="41" width="1" height="1" fill="#bbb"/>
<rect x="717" y="7" width="1" height="1" fill="#bbb"/>
<rect x="709" y="164" width="1" height="1" fill="#fff"/>
<rect x="713" y="17" width="1" height="1" fill="#fff"/>
<rect x="67" y="151" width="1" height="1" fill="#fff"/>
<rect x="204" y="136" width="1" height="1" fill="#fff"/>
<rect x="67" y="193" width="1" height="1" fill="#fff"/>
<rect x="393" y="27" width="1" height="1" fill="#bbb"/>
<rect x="114" y="8" width="1" height="1" fill="#aaa"/>
<rect x="769" y="161" width="1" height="1" fill="#fff"/>
<rect x="488" y="25" width="1" height="1" fill="#bbb"/>
<rect x="301" y="81" width="1" height="1" fill="#999"/>
<rect x="21" y="89" width="1" height="1" fill="#999"/>
<rect x="49" y="183" width="1" height="1" fill="#fff"/>
<rect x="328" y="196" width="1" height="1" fill="#fff"/>
<rect x="515" y="121" width="1" height="1" fill="#fff"/>
<rect x="633" y="190" width="1" height="1" fill="#ccc"/>
<rect x="31" y="111" width="1" height="1" fill="#aaa"/>
<rect x="355" y="120" width="1" height="1" fill="#fff"/>
<rect x="550" y="144" width="1" height="1" fill="#aaa"/>
<rect x="588" y="73" width="1" height="1" fill="#aaa"/>
<rect x="536" y="51" width="1" height="1" fill="#aaa"/>
<rect x="4" y="89" width="1" height="1" fill="#ccc"/>
<rect x="711" y="47" width="1" height="1" fill="#fff"/>
<rect x="606" y="88" width="1" height="1" fill="#fff"/>
<rect x="527" y="66" width="1" height="1" fill="#fff"/>
<rect x="162" y="72" width="1" height="1" fill="#fff"/>
<rect x="716" y="59" width="1" height="1" fill="#aaa"/>
<rect x="651" y="196" width="1" height="1" fill="#aaa"/>
<rect x="643" y="83" width="1" height="1" fill="#ccc"/>
<rect x="404" y="190" width="1" height="1" fill="#aaa"/>
<rect x="380" y="52" width="1" height="1" fill="#ccc"/>
<rect x="558" y="128" width="1" height="1" fill="#bbb"/>
<rect x="471" y="32" width="1" height="1" fill="#aaa"/>
<rect x="356" y="148" width="1" height="1" fill="#bbb"/>
<rect x="461" y="169" width="1" height="1" fill="#fff"/>
<rect x="331" y="43" width="1" height="1" fill="#999"/>
<rect x="593" y="59" width="1" height="1" fill="#ccc"/>
<rect x="658" y="178" width="1" height="1" fill="#bbb"/>
<rect x="273" y="77" width="1" height="1" fill="#fff"/>
<rect x="632" y="39" width="1" height="1" fill="#fff"/>
<rect x="253" y="185" width="1" height="1" fill="#999"/>
<rect x="164" y="60" width="1" height="1" fill="#bbb"/>
<rect x="264" y="186" width="2" height="2" fill="#eee"/>
<rect x="168" y="168" width="1" height="1" fill="#ccc"/>
<rect x="154" y="37" width="1" height="1" fill="#fff"/>
<rect x="750" y="76" width="1" height="1" fill="#bbb"/>
<rect x="111" y="163" width="1" height="1" fill="#fff"/>
<rect x="287" y="52" width="1" height="1" fill="#fff"/>
<rect x="475" y="8" width="1" height="1" fill="#ccc"/>
<rect x="710" y="56" width="1" height="1" fill="#999"/>
<rect x="474" y="5" width="1" height="1" fill="#ccc"/>
<rect x="5" y="189" width="1" height="1" fill="#ccc"/>
<rect x="717" y="146" width="1" height="1" fill="#fff"/>
<rect x="662" y="107" width="1" height="1" fill="#fff"/>
<rect x="683" y="184" width="1" height="1" fill="#fff"/>
<rect x="792" y="164" width="1" height="1" fill="#fff"/>
<rect x="234" y="173" width="1" height="1" fill="#aaa"/>
<rect x="464" y="110" width="1" height="1" fill="#aaa"/>
<rect x="429" y="62" width="1" height="1" fill="#fff"/>
<rect x="730" y="182" width="1" height="1" fill="#fff"/>
<rect x="256" y="108" width="1" height="1" fill="#aaa"/>
<rect x="636" y="104" width="1" height="1" fill="#bbb"/>
<rect x="670" y="83" width="1" height="1" fill="#fff"/>
<rect x="398" y="125" width="1" height="1" fill="#fff"/>
<rect x="108" y="9" width="1" height="1" fill="#bbb"/>
<rect x="164" y="183" width="1" height="1" fill="#fff"/>
<rect x="204" y="132" width="1" height="1" fill="#ccc"/>
<rect x="554" y="52" width="1" height="1" fill="#fff"/>
<rect x="524" y="4" width="1" height="1" fill="#fff"/>
<rect x="378" y="133" width="1" height="1" fill="#ccc"/>
<rect x="215" y="175" width="1" height="1" fill="#aaa"/>
<rect x="746" y="157" width="1" height="1" fill="#aaa"/>
<rect x="258" y="70" width="1" height="1" fill="#aaa"/>
<rect x="13" y="19" width="1" height="1" fill="#ccc"/>
<rect x="643" y="178" width="1" height="1" fill="#fff"/>
<rect x="594" y="67" width="1" height="1" fill="#999"/>
<rect x="759" y="102" width="1" height="1" fill="#fff"/>
<rect x="539" y="56" width="2" height="2" fill="#eee"/>
<rect x="401" y="118" width="1" height="1" fill="#bbb"/>
<rect x="795" y="17" width="1" height="1" fill="#fff"/>
<rect x="649" y="49" width="1" height="1" fill="#bbb"/>
<rect x="149" y="90" width="1" height="1" fill="#fff"/>
<rect x="423" y="119" width="2" height="2" fill="#eee"/>
<rect x="778" y="140" width="1" height="1" fill="#fff"/>
<rect x="480" y="90" width="1" height="1" fill="#fff"/>
<rect x="235" y="68" width="1" height="1" fill="#fff"/>
<rect x="703" y="64" width="1" height="1" fill="#fff"/>
<rect x="695" y="47" width="1" height="1" fill="#999"/>
<rect x="366" y="62" width="1" height="1" fill="#fff"/>
<rect x="328" y="122" width="1" height="1" fill="#aaa"/>
<rect x="675" y="92" width="1" height="1" fill="#999"/>
<rect x="394" y="14" width="1" height="1" fill="#999"/>
<rect x="143" y="135" width="1" height="1" fill="#fff"/>
<rect x="648" y="149" width="1" height="1" fill="#aaa"/>
<rect x="214" y="18" width="1" height="1" fill="#fff"/>
<rect x="256" y="155" width="1" height="1" fill="#bbb"/>
<rect x="239" y="47" width="1" height="1" fill="#fff"/>
<rect x="354" y="39" width="1" height="1" fill="#ccc"/>
<rect x="547" y="42" width="1" height="1" fill="#fff"/>
<rect x="704" y="155" width="1" height="1" fill="#fff"/>
<rect x="92" y="171" width="1" height="1" fill="#fff"/>
<rect x="561" y="162" width="1" height="1" fill="#fff"/>
<rect x="202" y="126" width="1" height="1" fill="#fff"/>
<rect x="543" y="20" width="1" height="1" fill="#fff"/>
<rect x="449" y="171" width="1" height="1" fill="#fff"/>
<rect x="568" y="30" width="1" height="1" fill="#bbb"/>
<rect x="142" y="121" width="1" height="1" fill="#aaa"/>
<rect x="495" y="119" width="1" height="1" fill="#fff"/>
<rect x="717" y="125" width="1" height="1" fill="#bbb"/>
<rect x="552" y="153" width="1" height="1" fill="#fff"/>
<rect x="6" y="41" width="1" height="1" fill="#fff"/>
<rect x="479" y="178" width="1" height="1" fill="#fff"/>
<rect x="681" y="75" width="1" height="1" fill="#fff"/>
<rect x="383" y="109" width="1" height="1" fill="#aaa"/>
<rect x="184" y="163" width="1" height="1" fill="#aaa"/>
<rect x="21" y="156" width="1" height="1" fill="#999"/>
<rect x="96" y="130" width="1" height="1" fill="#bbb"/>
<rect x="34" y="54" width="1" height="1" fill="#fff"/>
<rect x="640" y="32" width="1" height="1" fill="#999"/>
<rect x="349" y="121" width="1" height="1" fill="#fff"/>
<rect x="567" y="197" width="1" height="1" fill="#fff"/>
<rect x="290" y="111" width="1" height="1" fill="#999"/>
<rect x="567" y="13" width="1" height="1" fill="#fff"/>
<rect x="299" y="90" width="1" height="1" fill="#fff"/>
<rect x="413" y="85" width="1" height="1" fill="#999"/>
<rect x="518" y="88" width="1" height="1" fill="#fff"/>
<rect x="670" y="126" width="1" height="1" fill="#fff"/>
<rect x="338" y="49" width="1" height="1" fill="#999"/>
<rect x="130" y="150" width="1" height="1" fill="#fff"/>
<rect x="89" y="10" width="1" height="1" fill="#ccc"/>
<rect x="558" y="146" width="1" height="1" fill="#999"/>
<rect x="111" y="1" width="1" height="1" fill="#ccc"/>
<rect x="623" y="196" width="1" height="1" fill="#fff"/>
<rect x="512" y="139" width="1" height="1" fill="#fff"/>
<rect x="631" y="37" width="1" height="1" fill="#fff"/>
<rect x="713" y="176" width="1" height="1" fill="#fff"/>
<rect x="697" y="21" width="1" height="1" fill="#ccc"/>
<rect x="640" y="195" width="1" height="1" fill="#bbb"/>
<rect x="37" y="107" width="1" height="1" fill="#fff"/>
<rect x="671" y="3" width="1" height="1" fill="#bbb"/>
<rect x="316" y="143" width="1" height="1" fill="#fff"/>
<rect x="309" y="47" width="1" height="1" fill="#999"/>
<rect x="20" y="110" width="1" height="1" fill="#fff"/>
<rect x="592" y="13" width="1" height="1" fill="#aaa"/>
<rect x="121" y="198" width="1" height="1" fill="#fff"/>
<rect x="589" y="178" width="1" height="1" fill="#fff"/>
<rect x="457" y="17" width="1" height="1" fill="#ccc"/>
<rect x="608" y="151" width="2" height="2" fill="#eee"/>
<rect x="675" y="39" width="1" height="1" fill="#ccc"/>
<rect x="561" y="26" width="1" height="1" fill="#ccc"/>
<rect x="217" y="38" width="1" height="1" fill="#fff"/>
<rect x="437" y="1" width="1" height="1" fill="#aaa"/>
<rect x="90" y="55" width="1" height="1" fill="#fff"/>
<rect x="132" y="120" width="1" height="1" fill="#bbb"/>
<rect x="461" y="187" width="1" height="1" fill="#fff"/>
<rect x="51" y="93" width="1" height="1" fill="#fff"/>
<rect x="730" y="177" width="1" height="1" fill="#fff"/>
<rect x="747" y="194" width="1" height="1" fill="#ccc"/>
<rect x="471" y="171" width="1" height="1" fill="#fff"/>
<rect x="260" y="13" width="1" height="1" fill="#fff"/>
<rect x="11" y="15" width="1" height="1" fill="#aaa"/>
<rect x="398" y="79" width="1" height="1" fill="#bbb"/>
<rect x="498" y="155" width="1" height="1" fill="#999"/>
<rect x="588" y="186" width="1" height="1" fill="#bbb"/>
<rect x="148" y="29" width="1" height="1" fill="#bbb"/>
<rect x="644" y="106" width="1" height="1" fill="#ccc"/>
<rect x="278" y="193" width="1" height="1" fill="#fff"/>
<rect x="299" y="71" width="1" height="1" fill="#999"/>
<rect x="620" y="185" width="1" height="1" fill="#fff"/>
<rect x="154" y="153" width="1" height="1" fill="#fff"/>
<rect x="598" y="109" width="1" height="1" fill="#fff"/>
<rect x="252" y="96" width="1" height="1" fill="#ccc"/>
<rect x="616" y="197" width="1" height="1" fill="#fff"/>
<rect x="462" y="72" width="1" height="1" fill="#fff"/>
<rect x="329" y="67" width="1" height="1" fill="#bbb"/>
<rect x="600" y="195" width="1" height="1" fill="#fff"/>
<rect x="43" y="73" width="1" height="1" fill="#fff"/>
<rect x="585" y="37" width="1" height="1" fill="#ccc"/>
<rect x="355" y="136" width="1" height="1" fill="#ccc"/>
<rect x="390" y="51" width="1" height="1" fill="#fff"/>
<rect x="739" y="59" width="1" height="1" fill="#aaa"/>
<rect x="693" y="101" width="1" height="1" fill="#bbb"/>
<rect x="260" y="150" width="1" height="1" fill="#fff"/>
<rect x="394" y="117" width="1" height="1" fill="#999"/>
<rect x="790" y="16" width="1" height="1" fill="#999"/>
<rect x="534" y="82" width="1" height="1" fill="#bbb"/>
<rect x="193" y="54" width="1" height="1" fill="#bbb"/>
<rect x="717" y="74" width="1" height="1" fill="#999"/>
<rect x="412" y="199" width="1" height="1" fill="#bbb"/>
<rect x="252" y="11" width="1" height="1" fill="#fff"/>
<rect x="505" y="95" width="1" height="1" fill="#fff"/>
<rect x="380" y="161" width="1" height="1" fill="#aaa"/>
<rect x="159" y="80" width="1" height="1" fill="#fff"/>
<rect x="353" y="71" width="1" height="1" fill="#aaa"/>
<rect x="96" y="8" width="1" height="1" fill="#ccc"/>
<rect x="600" y="145" width="1" height="1" fill="#999"/>
<rect x="436" y="24" width="1" height="1" fill="#fff"/>
<rect x="785" y="151" width="1" height="1" fill="#fff"/>
<rect x="134" y="65" width="1" height="1" fill="#fff"/>
<rect x="346" y="51" width="2" height="2" fill="#eee"/>
<rect x="387" y="21" width="1" height="1" fill="#aaa"/>
<rect x="570" y="94" width="1" height="1" fill="#fff"/>
<rect x="469" y="124" width="1" height="1" fill="#fff"/>
<rect x="65" y="153" width="1" height="1" fill="#fff"/>
<rect x="122" y="180" width="1" height="1" fill="#fff"/>
<rect x="263" y="81" width="1" height="1" fill="#fff"/>
<rect x="656" y="22" width="1" height="1" fill="#fff"/>
<rect x="685" y="129" width="1" height="1" fill="#ccc"/>
<rect x="163" y="94" width="1" height="1" fill="#fff"/>
<rect x="738" y="56" width="1" height="1" fill="#999"/>
<rect x="360" y="15" width="1" height="1" fill="#fff"/>
<rect x="28" y="12" width="1" height="1" fill="#ccc"/>
<rect x="57" y="25" width="1" height="1" fill="#aaa"/>
<rect x="203" y="173" width="1" height="1" fill="#fff"/>
<rect x="603" y="151" width="1" height="1" fill="#aaa"/>
<rect x="482" y="82" width="1" height="1" fill="#ccc"/>
<rect x="127" y="95" width="1" height="1" fill="#bbb"/>
<rect x="451" y="61" width="1" height="1" fill="#fff"/>
<rect x="693" y="3" width="1" height="1" fill="#bbb"/>
<rect x="36" y="40" width="1" height="1" fill="#fff"/>
<rect x="225" y="19" width="1" height="1" fill="#fff"/>
<rect x="382" y="191" width="1" height="1" fill="#ccc"/>
<rect x="99" y="98" width="1" height="1" fill="#fff"/>
<rect x="643" y="19" width="1" height="1" fill="#999"/>
<rect x="330" y="59" width="1" height="1" fill="#999"/>
<rect x="146" y="84" width="1" height="1" fill="#aaa"/>
<rect x="184" y="182" width="1" height="1" fill="#bbb"/>
<rect x="449" y="38" width="1" height="1" fill="#ccc"/>
<rect x="252" y="39" width="1" height="1" fill="#999"/>
<rect x="342" y="42" width="1" height="1" fill="#aaa"/>
<rect x="325" y="116" width="1" height="1" fill="#fff"/>
<rect x="116" y="39" width="1" height="1" fill="#fff"/>
<rect x="58" y="161" width="1" height="1" fill="#fff"/>
<rect x="684" y="54" width="1" height="1" fill="#fff"/>
<rect x="293" y="30" width="1" height="1" fill="#bbb"/>
<rect x="373" y="110" width="2" height="2" fill="#eee"/>
<rect x="244" y="60" width="1" height="1" fill="#999"/>
<rect x="425" y="41" width="1" height="1" fill="#999"/>
<rect x="147" y="163" width="1" height="1" fill="#999"/>
<rect x="523" y="35" width="1" height="1" fill="#999"/>
<rect x="190" y="92" width="1" height="1" fill="#ccc"/>
<rect x="223" y="70" width="1" height="1" fill="#fff"/>
<rect x="141" y="46" width="1" height="1" fill="#bbb"/>
<rect x="728" y="44" width="1" height="1" fill="#aaa"/>
<rect x="89" y="155" width="1" height="1" fill="#fff"/>
<rect x="779" y="70" width="1" height="1" fill="#bbb"/>
<rect x="627" y="171" width="1" height="1" fill="#fff"/>
<rect x="196" y="149" width="1" height="1" fill="#aaa"/>
<rect x="67" y="177" width="1" height="1" fill="#fff"/>
<rect x="417" y="184" width="1" height="1" fill="#fff"/>
<rect x="530" y="88" width="1" height="1" fill="#ccc"/>
<rect x="92" y="3" width="1" height="1" fill="#ccc"/>
<rect x="136" y="170" width="1" height="1" fill="#bbb"/>
<rect x="576" y="93" width="1" height="1" fill="#999"/>
<rect x="588" y="152" width="1" height="1" fill="#fff"/>
<rect x="364" y="133" width="1" height="1" fill="#fff"/>
<rect x="528" y="18" width="1" height="1" fill="#bbb"/>
<rect x="328" y="199" width="1" height="1" fill="#fff"/>
<rect x="390" y="147" width="1" height="1" fill="#fff"/>
<rect x="62" y="74" width="1" height="1" fill="#fff"/>
<rect x="748" y="126" width="1" height="1" fill="#aaa"/>
<rect x="543" y="137" width="1" height="1" fill="#bbb"/>
<rect x="90" y="57" width="1" height="1" fill="#fff"/>
<rect x="171" y="26" width="1" height="1" fill="#aaa"/>
<rect x="19" y="24" width="1" height="1" fill="#fff"/>
<rect x="756" y="49" width="1" height="1" fill="#ccc"/>
<rect x="535" y="61" width="1" height="1" fill="#fff"/>
<rect x="105" y="89" width="1" height="1" fill="#fff"/>
<rect x="734" y="45" width="1" height="1" fill="#aaa"/>
<rect x="476" y="126" width="1" height="1" fill="#fff"/>
<rect x="779" y="71" width="1" height="1" fill="#aaa"/>
<rect x="415" y="35" width="1" height="1" fill="#bbb"/>
<rect x="232" y="37" width="1" height="1" fill="#fff"/>
<rect x="473" y="191" width="1" height="1" fill="#aaa"/>
<rect x="650" y="99" width="1" height="1" fill="#fff"/>
<rect x="611" y="154" width="1" height="1" fill="#ccc"/>
<rect x="53" y="198" width="1" height="1" fill="#ccc"/>
<rect x="246" y="85" width="1" height="1" fill="#fff"/>
<rect x="577" y="82" width="1" height="1" fill="#fff"/>
<rect x="574" y="13" width="1" height="1" fill="#bbb"/>
<rect x="696" y="90" width="1" height="1" fill="#ccc"/>
<rect x="679" y="161" width="1" height="1" fill="#aaa"/>
<rect x="543" y="47" width="1" height="1" fill="#ccc"/>
<rect x="205" y="129" width="1" height="1" fill="#fff"/>
<rect x="230" y="35" width="1" height="1" fill="#ccc"/>
<rect x="795" y="116" width="1" height="1" fill="#fff"/>
<rect x="41" y="8" width="1" height="1" fill="#fff"/>
<rect x="635" y="68" width="1" height="1" fill="#fff"/>
<rect x="638" y="69" width="1" height="1" fill="#fff"/>
<rect x="36" y="159" width="1" height="1" fill="#aaa"/>
<rect x="532" y="3" width="1" height="1" fill="#aaa"/>
<rect x="294" y="28" width="1" height="1" fill="#bbb"/>
<rect x="123" y="15" width="1" height="1" fill="#fff"/>
<rect x="526" y="68" width="1" height="1" fill="#bbb"/>
<rect x="450" y="31" width="1" height="1" fill="#999"/>
<rect x="416" y="147" width="1" height="1" fill="#bbb"/>
<rect x="753" y="22" width="1" height="1" fill="#fff"/>
<rect x="294" y="116" width="1" height="1" fill="#fff"/>
<rect x="583" y="56" width="1" height="1" fill="#fff"/>
<rect x="206" y="140" width="1" height="1" fill="#fff"/>
<rect x="471" y="140" width="1" height="1" fill="#ccc"/>
<rect x="480" y="79" width="1" height="1" fill="#999"/>
<rect x="226" y="48" width="1" height="1" fill="#ccc"/>
<rect x="599" y="101" width="1" height="1" fill="#999"/>
<rect x="166" y="61" width="1" height="1" fill="#999"/>
<rect x="503" y="69" width="1" height="1" fill="#bbb"/>
<rect x="302" y="14" width="1" height="1" fill="#fff"/>
<rect x="162" y="141" width="1" height="1" fill="#999"/>
<rect x="450" y="168" width="1" height="1" fill="#ccc"/>
<rect x="450" y="90" width="1" height="1" fill="#fff"/>
<rect x="111" y="133" width="1" height="1" fill="#bbb"/>
<rect x="426" y="86" width="1" height="1" fill="#fff"/>
<rect x="143" y="172" width="1" height="1" fill="#999"/>
<rect x="530" y="24" width="1" height="1" fill="#fff"/>
<rect x="761" y="194" width="2" height="2" fill="#eee"/>
<rect x="275" y="161" width="1" height="1" fill="#fff"/>
<rect x="720" y="32" width="1" height="1" fill="#aaa"/>
<rect x="4" y="105" width="1" height="1" fill="#fff"/>
<rect x="599" y="30" width="1" height="1" fill="#bbb"/>
<rect x="427" y="71" width="1" height="1" fill="#fff"/>
<rect x="621" y="28" width="1" height="1" fill="#ccc"/>
<rect x="709" y="117" width="1" height="1" fill="#999"/>
<rect x="299" y="90" width="1" height="1" fill="#ccc"/>
<rect x="663" y="82" width="1" height="1" fill="#ccc"/>
<rect x="389" y="113" width="1" height="1" fill="#999"/>
<rect x="148" y="111" width="1" height="1" fill="#fff"/>
<rect x="595" y="59" width="1" height="1" fill="#999"/>
<rect x="331" y="155" width="1" height="1" fill="#fff"/>
<rect x="333" y="52" width="1" height="1" fill="#fff"/>
<rect x="10" y="6" width="1" height="1" fill="#ccc"/>
<rect x="307" y="137" width="1" height="1" fill="#fff"/>
<rect x="551" y="158" width="2" height="2" fill="#eee"/>
<rect x="529" y="132" width="1" height="1" fill="#fff"/>
<rect x="440" y="99" width="1" height="1" fill="#aaa"/>
<rect x="608" y="173" width="1" height="1" fill="#aaa"/>
<rect x="692" y="17" width="1" height="1" fill="#aaa"/>
<rect x="419" y="95" width="1" height="1" fill="#bbb"/>
<rect x="192" y="107" width="1" height="1" fill="#ccc"/>
<rect x="785" y="159" width="1" height="1" fill="#fff"/>
<rect x="601" y="87" width="1" height="1" fill="#fff"/>
<rect x="764" y="23" width="1" height="1" fill="#999"/>
<rect x="375" y="19" width="1" height="1" fill="#fff"/>
<rect x="524" y="44" width="1" height="1" fill="#999"/>
<rect x="706" y="87" width="1" height="1" fill="#fff"/>
<rect x="521" y="107" width="1" height="1" fill="#fff"/>
<rect x="536" y="74" width="1" height="1" fill="#fff"/>
<rect x="212" y="129" width="1" height="1" fill="#fff"/>
<rect x="422" y="46" width="1" height="1" fill="#aaa"/>
<rect x="361" y="145" width="2" height="2" fill="#eee"/>
<rect x="651" y="185" width="1" height="1" fill="#ccc"/>
<rect x="10" y="0" width="1" height="1" fill="#aaa"/>
<rect x="311" y="101" width="1" height="1" fill="#fff"/>
<rect x="600" y="3" width="1" height="1" fill="#fff"/>
<rect x="201" y="44" width="1" height="1" fill="#999"/>
<rect x="662" y="136" width="1" height="1" fill="#bbb"/>
<rect x="588" y="50" width="1" height="1" fill="#aaa"/>
<rect x="148" y="40" width="1" height="1" fill="#aaa"/>
<rect x="29" y="25" width="1" height="1" fill="#ccc"/>
<rect x="478" y="156" width="1" height="1" fill="#aaa"/>
<rect x="665" y="3" width="1" height="1" fill="#fff"/>
<rect x="592" y="82" width="1" height="1" fill="#bbb"/>
<rect x="362" y="70" width="1" height="1" fill="#999"/>
<rect x="643" y="25" width="1" height="1" fill="#fff"/>
<rect x="596" y="16" width="1" height="1" fill="#ccc"/>
<rect x="638" y="98" width="1" height="1" fill="#bbb"/>
<rect x="405" y="149" width="1" height="1" fill="#fff"/>
<rect x="44" y="112" width="1" height="1" fill="#bbb"/>
<rect x="255" y="57" width="1" height="1" fill="#bbb"/>
<rect x="322" y="1" width="1" height="1" fill="#fff"/>
<rect x="466" y="77" width="1" height="1" fill="#999"/>
<rect x="507" y="17" width="1" height="1" fill="#ccc"/>
<rect x="691" y="183" width="1" height="1" fill="#fff"/>
<rect x="423" y="79" width="1" height="1" fill="#ccc"/>
<rect x="22" y="62" width="1" height="1" fill="#bbb"/>
<rect x="366" y="97" width="1" height="1" fill="#999"/>
<rect x="405" y="143" width="1" height="1" fill="#999"/>
<rect x="546" y="98" width="1" height="1" fill="#aaa"/>
<rect x="126" y="108" width="1" height="1" fill="#fff"/>
<rect x="359" y="141" width="1" height="1" fill="#bbb"/>
<rect x="478" y="72" width="1" height="1" fill="#ccc"/>
<rect x="35" y="71" width="1" height="1" fill="#fff"/>
<rect x="349" y="39" width="1" height="1" fill="#bbb"/>
<rect x="94" y="50" width="1" height="1" fill="#bbb"/>
<rect x="568" y="113" width="1" height="1" fill="#bbb"/>
<rect x="163" y="94" width="1" height="1" fill="#ccc"/>
<rect x="385" y="161" width="1" height="1" fill="#fff"/>
<rect x="213" y="76" width="1" height="1" fill="#fff"/>
<rect x="516" y="52" width="1" height="1" fill="#ccc"/>
<rect x="691" y="33" width="1" height="1" fill="#fff"/>
<rect x="267" y="152" width="1" height="1" fill="#fff"/>
<rect x="601" y="94" width="1" height="1" fill="#ccc"/>
<rect x="622" y="130" width="1" height="1" fill="#aaa"/>
<rect x="694" y="131" width="1" height="1" fill="#999"/>
<rect x="753" y="197" width="1" height="1" fill="#fff"/>
<rect x="29" y="168" width="1" height="1" fill="#fff"/>
<rect x="148" y="79" width="1" height="1" fill="#aaa"/>
<rect x="711" y="45" width="1" height="1" fill="#fff"/>
<rect x="237" y="82" width="1" height="1" fill="#aaa"/>
<rect x="69" y="143" width="1" height="1" fill="#fff"/>
<rect x="512" y="194" width="1" height="1" fill="#aaa"/>
<rect x="735" y="79" width="1" height="1" fill="#999"/>
<rect x="129" y="183" width="1" height="1" fill="#999"/>
<rect x="413" y="118" width="1" height="1" fill="#fff"/>
<rect x="643" y="33" width="1" height="1" fill="#fff"/>
<rect x="180" y="7" width="1" height="1" fill="#999"/>
<rect x="422" y="6" width="1" height="1" fill="#fff"/>
<rect x="716" y="118" width="1" height="1" fill="#ccc"/>
<rect x="360" y="160" width="1" height="1" fill="#999"/>
<rect x="117" y="69" width="1" height="1" fill="#fff"/>
<rect x="751" y="56" width="1" height="1" fill="#fff"/>
<rect x="41" y="103" width="1" height="1" fill="#bbb"/>
<rect x="441" y="50" width="1" height="1" fill="#fff"/>
<rect x="159" y="97" width="1" height="1" fill="#fff"/>
<rect x="565" y="79" width="1" height="1" fill="#fff"/>
<rect x="183" y="144" width="1" height="1" fill="#fff"/>
<rect x="583" y="127" width="1" height="1" fill="#fff"/>
<rect x="260" y="111" width="1" height="1" fill="#fff"/>
<rect x="589" y="89" width="1" height="1" fill="#fff"/>
<rect x="114" y="195" width="1" height="1" fill="#fff"/>
<rect x="293" y="10" width="1" height="1" fill="#fff"/>
<rect x="599" y="155" width="1" height="1" fill="#fff"/>
<rect x="250" y="174" width="1" height="1" fill="#999"/>
<rect x="215" y="198" width="1" height="1" fill="#fff"/>
<rect x="767" y="22" width="1" height="1" fill="#ccc"/>
<rect x="765" y="157" width="1" height="1" fill="#fff"/>
<rect x="287" y="134" width="1" height="1" fill="#ccc"/>
<rect x="453" y="87" width="1" height="1" fill="#fff"/>
<rect x="756" y="176" width="1" height="1" fill="#fff"/>
<rect x="643" y="160" width="1" height="1" fill="#aaa"/>
<rect x="692" y="178" width="1" height="1" fill="#bbb"/>
<rect x="501" y="195" width="1" height="1" fill="#999"/>
<rect x="178" y="139" width="1" height="1" fill="#bbb"/>
<rect x="556" y="66" width="1" height="1" fill="#aaa"/>
<rect x="172" y="91" width="1" height="1" fill="#aaa"/>
<rect x="206" y="162" width="1" height="1" fill="#bbb"/>
<rect x="702" y="180" width="1" height="1" fill="#ccc"/>
<rect x="243" y="180" width="1" height="1" fill="#ccc"/>
<rect x="136" y="164" width="1" height="1" fill="#999"/>
<rect x="136" y="181" width="1" height="1" fill="#bbb"/>
<rect x="341" y="161" width="1" height="1" fill="#fff"/>
<rect x="561" y="108" width="1" height="1" fill="#fff"/>
<rect x="173" y="173" width="1" height="1" fill="#fff"/>
<rect x="613" y="118" width="1" height="1" fill="#fff"/>
<rect x="415" y="52" width="1" height="1" fill="#999"/>
<rect x="12" y="92" width="1" height="1" fill="#aaa"/>
<rect x="61" y="71" width="1" height="1" fill="#aaa"/>
<rect x="718" y="79" width="1" height="1" fill="#aaa"/>
<rect x="165" y="83" width="1" height="1" fill="#999"/>
<rect x="296" y="43" width="1" height="1" fill="#fff"/>
<rect x="46" y="2" width="1" height="1" fill="#ccc"/>
<rect x="85" y="191" width="1" height="1" fill="#fff"/>
<rect x="756" y="144" width="1" height="1" fill="#ccc"/>
<rect x="444" y="125" width="1" height="1" fill="#999"/>
<rect x="8" y="91" width="1" height="1" fill="#fff"/>
<rect x="659" y="73" width="1" height="1" fill="#fff"/>
<rect x="748" y="167" width="1" height="1" fill="#fff"/>
<rect x="668" y="62" width="1" height="1" fill="#aaa"/>
<rect x="25" y="198" width="1" height="1" fill="#bbb"/>
<rect x="303" y="94" width="1" height="1" fill="#bbb"/>
<rect x="104" y="184" width="1" height="1" fill="#fff"/>
<rect x="760" y="157" width="1" height="1" fill="#bbb"/>
<rect x="662" y="91" width="1" height="1" fill="#999"/>
<rect x="139" y="141" width="1" height="1" fill="#fff"/>
<rect x="259" y="61" width="1" height="1" fill="#aaa"/>
<rect x="580" y="160" width="1" height="1" fill="#fff"/>
<rect x="722" y="103" width="1" height="1" fill="#fff"/>
<rect x="221" y="126" width="1" height="1" fill="#bbb"/>
<rect x="306" y="154" width="1" height="1" fill="#fff"/>
<rect x="82" y="36" width="1" height="1" fill="#fff"/>
<rect x="167" y="35" width="1" height="1" fill="#ccc"/>
<rect x="91" y="10" width="1" height="1" fill="#fff"/>
<rect x="490" y="48" width="1" height="1" fill="#999"/>
<rect x="2" y="8" width="1" height="1" fill="#fff"/>
<rect x="523" y="108" width="1" height="1" fill="#aaa"/>
<rect x="677" y="14" width="1" height="1" fill="#ccc"/>
<rect x="346" y="16" width="1" height="1" fill="#bbb"/>
<rect x="742" y="42" width="1" height="1" fill="#aaa"/>
<rect x="453" y="144" width="1" height="1" fill="#fff"/>
<rect x="581" y="50" width="1" height="1" fill="#999"/>
<rect x="529" y="117" width="1" height="1" fill="#bbb"/>
<rect x="410" y="155" width="1" height="1" fill="#fff"/>
<rect x="61" y="185" width="1" height="1" fill="#fff"/>
<rect x="623" y="168" width="1" height="1" fill="#ccc"/>
<rect x="377" y="123" width="1" height="1" fill="#fff"/>
<rect x="140" y="76" width="1" height="1" fill="#fff"/>
<rect x="543" y="162" width="1" height="1" fill="#bbb"/>
<rect x="227" y="173" width="1" height="1" fill="#fff"/>
<rect x="707" y="21" width="1" height="1" fill="#999"/>
<rect x="568" y="148" width="1" height="1" fill="#fff"/>
<rect x="368" y="135" width="1" height="1" fill="#ccc"/>
<rect x="405" y="66" width="1" height="1" fill="#bbb"/>
<rect x="207" y="140" width="1" height="1" fill="#fff"/>
<rect x="226" y="64" width="1" height="1" fill="#fff"/>
<rect x="192" y="135" width="1" height="1" fill="#fff"/>
<rect x="726" y="125" width="1" height="1" fill="#ccc"/>
<rect x="231" y="138" width="1" height="1" fill="#fff"/>
<rect x="115" y="188" width="1" height="1" fill="#aaa"/>
<rect x="417" y="173" width="1" height="1" fill="#ccc"/>
<rect x="137" y="128" width="1" height="1" fill="#fff"/>
<rect x="731" y="193" width="1" height="1" fill="#fff"/>
<rect x="641" y="184" width="1" height="1" fill="#ccc"/>
<rect x="702" y="100" width="1" height="1" fill="#bbb"/>
<rect x="576" y="121" width="1" height="1" fill="#fff"/>
<rect x="140" y="95" width="1" height="1" fill="#fff"/>
<rect x="58" y="103" width="1" height="1" fill="#999"/>
<rect x="42" y="3" width="1" height="1" fill="#fff"/>
<rect x="218" y="117" width="1" height="1" fill="#bbb"/>
<rect x="436" y="22" width="1" height="1" fill="#fff"/>
<rect x="206" y="144" width="1" height="1" fill="#999"/>
<rect x="172" y="93" width="1" height="1" fill="#fff"/>
<rect x="349" y="195" width="1" height="1" fill="#fff"/>
<rect x="11" y="65" width="1" height="1" fill="#999"/>
<rect x="525" y="188" width="1" height="1" fill="#999"/>
<rect x="739" y="125" width="1" height="1" fill="#999"/>
<rect x="102" y="91" width="1" height="1" fill="#aaa"/>
<rect x="34" y="172" width="1" height="1" fill="#999"/>
<rect x="197" y="177" width="1" height="1" fill="#ccc"/>
<rect x="116" y="5" width="1" height="1" fill="#aaa"/>
<rect x="264" y="47" width="1" height="1" fill="#999"/>
<rect x="703" y="171" width="1" height="1" fill="#bbb"/>
<rect x="602" y="64" width="1" height="1" fill="#999"/>
<rect x="454" y="3" width="1" height="1" fill="#bbb"/>
<rect x="498" y="128" width="1" height="1" fill="#aaa"/>
<rect x="36" y="19" width="1" height="1" fill="#ccc"/>
<rect x="487" y="40" width="1" height="1" fill="#fff"/>
<rect x="459" y="100" width="1" height="1" fill="#aaa"/>
<rect x="369" y="84" width="1" height="1" fill="#999"/>
<rect x="134" y="150" width="1" height="1" fill="#fff"/>
<rect x="216" y="43" width="1" height="1" fill="#fff"/>
<rect x="744" y="119" width="1" height="1" fill="#ccc"/>
<rect x="397" y="90" width="1" height="1" fill="#999"/>
<rect x="593" y="123" width="1" height="1" fill="#aaa"/>
<rect x="254" y="117" width="1" height="1" fill="#fff"/>
<rect x="623" y="11" width="1" height="1" fill="#fff"/>
<rect x="744" y="171" width="1" height="1" fill="#ccc"/>
<rect x="279" y="16" width="1" height="1" fill="#999"/>
<rect x="365" y="145" width="1" height="1" fill="#fff"/>
<rect x="598" y="35" width="2" height="2" fill="#eee"/>
<rect x="34" y="143" width="1" height="1" fill="#fff"/>
<rect x="97" y="51" width="1" height="1" fill="#fff"/>
<rect x="648" y="146" width="1" height="1" fill="#fff"/>
<rect x="371" y="72" width="1" height="1" fill="#fff"/>
<rect x="243" y="36" width="1" height="1" fill="#fff"/>
<rect x="311" y="195" width="1" height="1" fill="#999"/>
<rect x="521" y="162" width="1" height="1" fill="#ccc"/>
<rect x="342" y="15" width="1" height="1" fill="#fff"/>
<rect x="687" y="82" width="1" height="1" fill="#fff"/>
<rect x="493" y="128" width="1" height="1" fill="#bbb"/>
<rect x="240" y="89" width="1" height="1" fill="#bbb"/>
<rect x="7" y="171" width="1" height="1" fill="#ccc"/>
<rect x="405" y="145" width="1" height="1" fill="#fff"/>
<rect x="172" y="150" width="1" height="1" fill="#999"/>
<rect x="737" y="78" width="1" height="1" fill="#999"/>
<rect x="75" y="48" width="1" height="1" fill="#fff"/>
<rect x="81" y="149" width="1" height="1" fill="#999"/>
<rect x="479" y="91" width="1" height="1" fill="#fff"/>
<rect x="706" y="109" width="1" height="1" fill="#fff"/>
<rect x="69" y="124" width="1" height="1" fill="#bbb"/>
<rect x="282" y="65" width="1" height="1" fill="#bbb"/>
<rect x="641" y="68" width="1" height="1" fill="#aaa"/>
<rect x="223" y="12" width="1" height="1" fill="#bbb"/>
<rect x="617" y="72" width="1" height="1" fill="#fff"/>
<rect x="663" y="25" width="1" height="1" fill="#aaa"/>
<rect x="132" y="153" width="1" height="1" fill="#aaa"/>
<rect x="589" y="87" width="1" height="1" fill="#fff"/>
<rect x="5" y="48" width="1" height="1" fill="#aaa"/>
<rect x="655" y="82" width="1" height="1" fill="#fff"/>
<rect x="217" y="82" width="1" height="1" fill="#aaa"/>
<rect x="664" y="124" width="1" height="1" fill="#999"/>
<rect x="178" y="14" width="1" height="1" fill="#fff"/>
<rect x="46" y="22" width="1" height="1" fill="#fff"/>
<rect x="342" y="198" width="1" height="1" fill="#ccc"/>
<rect x="263" y="118" width="1" height="1" fill="#fff"/>
<rect x="26" y="81" width="1" height="1" fill="#fff"/>
<rect x="320" y="14" width="1" height="1" fill="#999"/>
<rect x="160" y="23" width="1" height="1" fill="#bbb"/>
<rect x="146" y="135" width="1" height="1" fill="#fff"/>
<rect x="92" y="91" width="1" height="1" fill="#fff"/>
<rect x="433" y="88" width="1" height="1" fill="#bbb"/>
<rect x="673" y="154" width="1" height="1" fill="#fff"/>
<rect x="235" y="189" width="1" height="1" fill="#fff"/>
<rect x="728" y="122" width="1" height="1" fill="#fff"/>
<rect x="794" y="165" width="1" height="1" fill="#ccc"/>
<rect x="461" y="4" width="3" height="2" fill="#f4f4f4"/>
<rect x="393" y="58" width="2" height="2" fill="#f4f4f4"/>
<rect x="523" y="55" width="3" height="1" fill="#f4f4f4"/>
<line x1="0" x2="798" y1="27.5" y2="27.5" stroke="#9ce820" stroke-width="1" stroke-dasharray="3 1"/>
<line x1="0" x2="798" y1="69.5" y2="69.5" stroke="#9ce820" stroke-width="1" stroke-dasharray="3 1"/>
<line x1="0" x2="798" y1="73.5" y2="73.5" stroke="#7cc0f0" stroke-width="1"/>
<line x1="0" x2="798" y1="99.5" y2="99.5" stroke="#f04a10" stroke-width="1" stroke-dasharray="3 1"/>
<line x1="0" x2="798" y1="125.5" y2="125.5" stroke="#7cc0f0" stroke-width="1"/>
<line x1="0" x2="798" y1="129.5" y2="129.5" stroke="#9ce820" stroke-width="1" stroke-dasharray="3 1"/>
<line x1="0" x2="798" y1="171.5" y2="171.5" stroke="#9ce820" stroke-width="1" stroke-dasharray="3 1"/>
</g>
</svg>
<div class="abs dither" style="left:24px;top:501px;width:790px;height:18px"></div>
<div class="btn" style="left:24px;top:501px;width:16px;height:18px;"></div>
<div class="btn" style="left:798px;top:501px;width:16px;height:18px;"></div>
<div class="btn" style="left:790px;top:501px;width:8px;height:18px;"></div>
<svg class="abs" style="left:29px;top:506px" width="4" height="7" viewBox="0 0 4 7" shape-rendering="crispEdges"><path d="M3 0h1v7h-1v-1h-1v-1h-1v-1h-1v-1h1v-1h1v-1h1z" fill="#000"/></svg>
<svg class="abs" style="left:804px;top:506px" width="4" height="7" viewBox="0 0 4 7" shape-rendering="crispEdges"><path d="M0 0h1v1h1v1h1v1h1v1h-1v1h-1v1h-1v1h-1z" fill="#000"/></svg>
<div class="abs" style="left:92px;top:560px;width:721px;height:4px;border:1px solid;border-color:#808080 #fff #fff #808080;box-shadow:inset 1px 1px 0 #404040;background:#D4D0C8"></div>
<svg class="abs" style="left:103px;top:553px" width="11" height="21" viewBox="0 0 11 21" shape-rendering="crispEdges"><path d="M0 0H11V15L5.5 20.5L0 15Z" fill="#D4D0C8"/><path d="M1 15H10L5.5 19.5Z" fill="#D4D0C8"/><rect x="0" y="0" width="10" height="1" fill="#fff"/><rect x="0" y="1" width="1" height="14" fill="#fff"/><rect x="0" y="15" width="1" height="1" fill="#fff"/><rect x="1" y="16" width="1" height="1" fill="#fff"/><rect x="2" y="17" width="1" height="1" fill="#fff"/><rect x="3" y="18" width="1" height="1" fill="#fff"/><rect x="4" y="19" width="1" height="1" fill="#fff"/><rect x="9" y="1" width="1" height="14" fill="#808080"/><rect x="9" y="15" width="1" height="1" fill="#808080"/><rect x="8" y="16" width="1" height="1" fill="#808080"/><rect x="7" y="17" width="1" height="1" fill="#808080"/><rect x="6" y="18" width="1" height="1" fill="#808080"/><rect x="5" y="19" width="1" height="1" fill="#808080"/><rect x="10" y="0" width="1" height="15" fill="#404040"/><rect x="10" y="15" width="1" height="1" fill="#404040"/><rect x="9" y="16" width="1" height="1" fill="#404040"/><rect x="8" y="17" width="1" height="1" fill="#404040"/><rect x="7" y="18" width="1" height="1" fill="#404040"/><rect x="6" y="19" width="1" height="1" fill="#404040"/><rect x="5" y="20" width="1" height="1" fill="#404040"/></svg>
<div class="abs" style="left:92px;top:592px;width:721px;height:4px;border:1px solid;border-color:#808080 #fff #fff #808080;box-shadow:inset 1px 1px 0 #404040;background:#D4D0C8"></div>
<svg class="abs" style="left:92px;top:585px" width="11" height="21" viewBox="0 0 11 21" shape-rendering="crispEdges"><path d="M0 0H11V15L5.5 20.5L0 15Z" fill="#D4D0C8"/><path d="M1 15H10L5.5 19.5Z" fill="#D4D0C8"/><rect x="0" y="0" width="10" height="1" fill="#fff"/><rect x="0" y="1" width="1" height="14" fill="#fff"/><rect x="0" y="15" width="1" height="1" fill="#fff"/><rect x="1" y="16" width="1" height="1" fill="#fff"/><rect x="2" y="17" width="1" height="1" fill="#fff"/><rect x="3" y="18" width="1" height="1" fill="#fff"/><rect x="4" y="19" width="1" height="1" fill="#fff"/><rect x="9" y="1" width="1" height="14" fill="#808080"/><rect x="9" y="15" width="1" height="1" fill="#808080"/><rect x="8" y="16" width="1" height="1" fill="#808080"/><rect x="7" y="17" width="1" height="1" fill="#808080"/><rect x="6" y="18" width="1" height="1" fill="#808080"/><rect x="5" y="19" width="1" height="1" fill="#808080"/><rect x="10" y="0" width="1" height="15" fill="#404040"/><rect x="10" y="15" width="1" height="1" fill="#404040"/><rect x="9" y="16" width="1" height="1" fill="#404040"/><rect x="8" y="17" width="1" height="1" fill="#404040"/><rect x="7" y="18" width="1" height="1" fill="#404040"/><rect x="6" y="19" width="1" height="1" fill="#404040"/><rect x="5" y="20" width="1" height="1" fill="#404040"/></svg>
<div class="sunk1" style="left:832px;top:552px;width:45px;height:20px"></div>
<div class="sunk1" style="left:832px;top:580px;width:45px;height:20px"></div>
<div class="edit" style="left:895px;top:552px;width:45px;height:20px;background:#fff;"></div>
<div class="edit" style="left:895px;top:580px;width:45px;height:20px;background:#fff;"></div>
<span class="t" id="title" style="left:23px;top:6.20px;transform:translateX(0.65px) scaleX(1.0921);font-weight:bold;color:#fff;font-size:11px">ISIS - V5.2.4</span>
<span class="t" id="tab1" style="left:28px;top:35.20px;transform:translateX(0.35px) scaleX(0.8434);">1. Image</span>
<span class="t" id="tab2" style="left:115px;top:35.20px;transform:translateX(0.53px) scaleX(0.8379);">2. Général</span>
<span class="t" id="tab3" style="left:203px;top:36.20px;transform:translateX(0.04px) scaleX(0.8431);">3. Etalonnage</span>
<span class="t" id="tab4" style="left:304px;top:35.20px;transform:translateX(0.91px) scaleX(0.8442);">4. Go</span>
<span class="t" id="tab5" style="left:379px;top:35.20px;transform:translateX(0.23px) scaleX(0.8320);">5. Profil</span>
<span class="t" id="tab6" style="left:460px;top:35.20px;transform:translateX(0.55px) scaleX(0.8351);">6. Gnuplot</span>
<span class="t" id="tab7" style="left:551px;top:35.20px;transform:translateX(0.88px) scaleX(0.8720);">Maîtres</span>
<span class="t" id="tab8" style="left:634px;top:35.20px;transform:translateX(0.59px) scaleX(0.8000);">Outils</span>
<span class="t" id="tab9" style="left:706px;top:35.20px;transform:translateX(0.07px) scaleX(0.8596);">Divers</span>
<span class="t" id="tab10" style="left:775px;top:35.20px;transform:translateX(0.79px) scaleX(0.8345);">Instruments</span>
<span class="t" id="tab11" style="left:864px;top:35.20px;transform:translateX(0.57px) scaleX(0.8272);">Configuration</span>
<span class="t" id="l1" style="left:26px;top:83.20px;transform:translateX(0.93px) scaleX(0.8400);">Image à traiter :</span>
<span class="t" id="l2" style="left:26px;top:115.20px;transform:translateX(0.94px) scaleX(0.8496);">Image d'étalonnage :</span>
<span class="t" id="i1" style="left:139px;top:83.20px;transform:translateX(0.95px) scaleX(0.8207);">altair_HK300s1</span>
<span class="t" id="i2" style="left:139px;top:115.20px;transform:translateX(1.00px) scaleX(0.8288);">filly_nova_HK600s1</span>
<span class="t" id="b1" style="left:433px;top:82.20px;transform:translateX(0.22px) scaleX(0.8487);">Afficher</span>
<span class="t" id="b2" style="left:433px;top:114.20px;transform:translateX(0.22px) scaleX(0.8487);">Afficher</span>
<span class="t" id="suiv" style="left:652px;top:85.20px;transform:translateX(0.45px) scaleX(0.8504);color:#C80000">Suivant</span>
<span class="t" id="l3" style="left:26px;top:153.20px;transform:translateX(0.18px) scaleX(0.8440);">Angle de tilt :</span>
<span class="t" id="i3" style="left:96px;top:154.20px;transform:translateX(0.67px) scaleX(0.8669);">0.45</span>
<span class="t" id="l4" style="left:155px;top:153.20px;transform:translateX(0.27px) scaleX(0.8458);">Angle de slant :</span>
<span class="t" id="i4" style="left:236px;top:154.20px;transform:translateX(0.71px) scaleX(0.8344);">0.50</span>
<span class="t" id="l5" style="left:403px;top:153.20px;transform:translateX(0.35px) scaleX(0.8490);">Coordonnée Y du spectre :</span>
<span class="t" id="i5" style="left:538px;top:154.20px;transform:translateX(0.58px) scaleX(0.8452);">102</span>
<span class="t" id="auto" style="left:607px;top:156.20px;transform:translateX(0.18px) scaleX(0.8685);">Auto</span>
<span class="t" id="ajust" style="left:654px;top:151.20px;transform:translateX(0.15px) scaleX(0.8477);">Ajustement de la zone de binning</span>
<span class="t" id="l6" style="left:27px;top:190.20px;transform:translateX(0.68px) scaleX(0.8437);">Coordonnée X de la raie de longueur d'onde</span>
<span class="t" id="i6" style="left:246px;top:190.20px;transform:translateX(0.98px) scaleX(0.8451);">4261.763</span>
<span class="t" id="lA" style="left:308px;top:190.20px;transform:translateX(0.35px) scaleX(0.7578);">A</span>
<span class="t" id="lEq" style="left:321px;top:190.20px;transform:translateX(0.68px) scaleX(0.7716);">=</span>
<span class="t" id="i7" style="left:334px;top:190.20px;transform:translateX(0.87px) scaleX(0.8568);">1478</span>
<span class="t" id="lpx" style="left:384px;top:190.20px;transform:translateX(0.53px) scaleX(0.8057);">( pixels )</span>
<span class="t" id="sauver" style="left:885px;top:88.20px;transform:translateX(0.46px) scaleX(0.8485);">Sauver</span>
<span class="t" id="entete" style="left:887px;top:126.20px;transform:translateX(0.18px) scaleX(0.8628);">Entête</span>
<span class="t" id="retic" style="left:888px;top:167.20px;transform:translateX(0.16px) scaleX(0.8719);">Réticule</span>
<span class="t" id="fwhm" style="left:885px;top:207.20px;transform:translateX(0.44px) scaleX(0.8669);">FWHM</span>
<span class="t" id="stat" style="left:878px;top:245.20px;transform:translateX(0.36px) scaleX(0.8385);">Statistique</span>
<span class="t" id="tilt" style="left:896px;top:283.20px;transform:translateX(0.51px) scaleX(0.7840);">Tilt</span>
<span class="t" id="slant" style="left:890px;top:321.20px;transform:translateX(0.34px) scaleX(0.8218);">Slant</span>
<span class="t" id="smile" style="left:890px;top:359.20px;transform:translateX(0.36px) scaleX(0.8162);color:#808080;text-shadow:1px 1px 0 #fff">Smile</span>
<span class="t" id="psf" style="left:868px;top:397.20px;transform:translateX(0.01px) scaleX(0.8444);">PSF d'une raie</span>
<span class="t" id="px" style="left:870px;top:436.20px;transform:translateX(0.67px) scaleX(0.8695);">X : 1333</span>
<span class="t" id="py" style="left:869px;top:456.20px;transform:translateX(0.59px) scaleX(0.8776);">Y : 200</span>
<span class="t" id="pi" style="left:870px;top:477.20px;transform:translateX(0.69px) scaleX(0.8350);">I</span>
<span class="t" id="pi2" style="left:880px;top:477.20px;transform:translateX(0.26px) scaleX(0.8962);">: 115</span>
<span class="t" id="st1" style="left:27px;top:527.20px;transform:translateX(0.03px) scaleX(0.8828);">Image affichée : f:\2013\nova_del2013\08-26\fits\travail\filly_nova_hk600s1.fits</span>
<span class="t" id="st2" style="left:450px;top:527.20px;transform:translateX(0.80px) scaleX(0.8518);">2013-08-26T21:53:17.76</span>
<span class="t" id="st3" style="left:658px;top:527.20px;transform:translateX(0.08px) scaleX(0.8438);">Exposition : 600.0 s</span>
<span class="t" id="sh" style="left:26px;top:553.20px;transform:translateX(0.29px) scaleX(0.8400);">Seuil haut :</span>
<span class="t" id="sb" style="left:26px;top:584.20px;transform:translateX(0.27px) scaleX(0.8369);">Seuil bas :</span>
<span class="t" id="v1" style="left:836px;top:556.20px;transform:translateX(0.51px) scaleX(0.7738);">381</span>
<span class="t" id="v2" style="left:836px;top:584.20px;transform:translateX(0.57px) scaleX(0.8208);">-100</span>
<span class="t" id="dom" style="left:895px;top:531.20px;transform:translateX(0.59px) scaleX(0.8299);">Domaine</span>
<span class="t" id="d1" style="left:898px;top:555.20px;transform:translateX(0.70px) scaleX(0.8530);">32000</span>
<span class="t" id="d2" style="left:898px;top:583.20px;transform:translateX(0.84px) scaleX(0.7978);">-100</span>
</div></body></html>
